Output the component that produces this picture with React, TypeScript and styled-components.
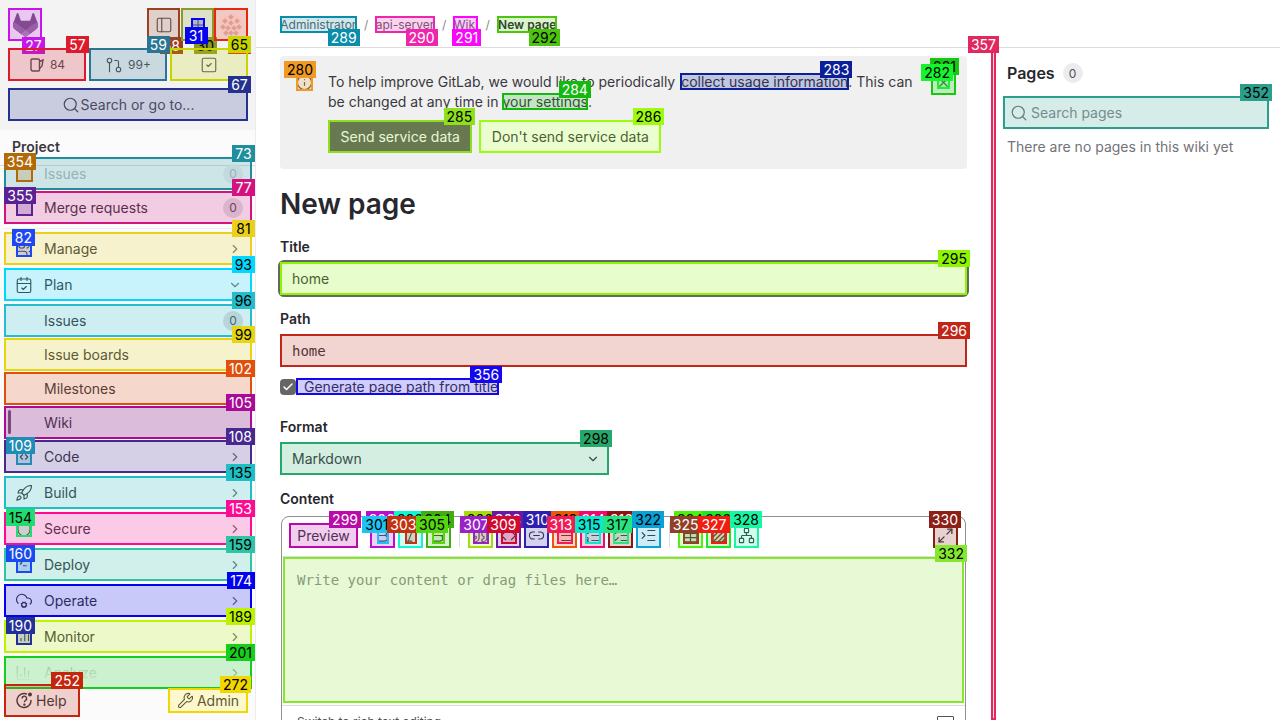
import React from "react";
import styled, { createGlobalStyle } from "styled-components";
import {
  BarChart3,
  Bold,
  CalendarCheck,
  Check,
  ChevronDown,
  ChevronRight,
  CloudCog,
  Code,
  GitPullRequest,
  Grid2x2,
  Indent,
  Info,
  Italic,
  Link2,
  List,
  ListChecks,
  ListOrdered,
  Maximize2,
  Network,
  PanelLeft,
  Quote,
  Rocket,
  Search,
  Shield,
  SquareCheck,
  SquareCode,
  SquareTerminal,
  Strikethrough,
  Table,
  Users,
  Wrench,
  X,
} from "lucide-react";

const GlobalStyle = createGlobalStyle`
  html, body {
    margin: 0;
    height: 100%;
    overflow: hidden;
    background: #fff;
  }
  body {
    font-family: Inter, "Liberation Sans", sans-serif;
    font-size: 14px;
    color: #3a383f;
  }
  * {
    box-sizing: border-box;
  }
  svg {
    flex: none;
  }
`;

// overlay: numbered outline drawn above whatever part it is put in
const MarkBox = styled.span<{ $c: string }>`
  position: absolute;
  inset: 0;
  z-index: 5;
  border: 2px solid ${(p) => p.$c};
  background: ${(p) => p.$c}33;
  pointer-events: none;
`;

const MarkTag = styled.span<{ $c: string; $ink: string; $below?: boolean }>`
  position: absolute;
  right: -5px;
  top: ${(p) => (p.$below ? "calc(100% - 2px)" : "-14px")};
  min-width: 23px;
  height: 17px;
  padding: 0 3px;
  background: ${(p) => p.$c};
  color: ${(p) => p.$ink};
  font: 400 14px/17px Inter, sans-serif;
  text-align: center;
  white-space: nowrap;
`;

function inkFor(c: string) {
  const r = parseInt(c.slice(1, 3), 16);
  const g = parseInt(c.slice(3, 5), 16);
  const b = parseInt(c.slice(5, 7), 16);
  return 0.299 * r + 0.587 * g + 0.114 * b > 118 ? "#000" : "#fff";
}

function Mark({ c, n, below }: { c: string; n: string; below?: boolean }) {
  return (
    <MarkBox $c={c}>
      <MarkTag $c={c} $ink={inkFor(c)} $below={below}>
        {n}
      </MarkTag>
    </MarkBox>
  );
}

const Page = styled.div`
  display: flex;
  width: 1280px;
  height: 720px;
`;

const Sidebar = styled.aside`
  flex: none;
  display: flex;
  flex-direction: column;
  width: 256px;
  height: 720px;
  background: #fbfbfc;
  border-right: 1px solid #ececef;
`;

const SideTop = styled.div`
  flex: none;
  display: flex;
  flex-direction: column;
  gap: 7px;
  height: 130px;
  padding: 8px 7px 8px 8px;
  background: #f3f3f3;
`;

const TopRow = styled.div`
  display: flex;
  justify-content: space-between;
  height: 33px;
`;

const TopActions = styled.div`
  display: flex;
`;

const SquareBtn = styled.div<{ $w?: number; $ml?: number }>`
  position: relative;
  display: flex;
  align-items: center;
  justify-content: center;
  width: ${(p) => p.$w ?? 34}px;
  height: 33px;
  margin-left: ${(p) => p.$ml ?? 0}px;
  color: #535158;
`;

const Slot = styled.span<{ $s?: number; $h?: number; $bleed?: boolean }>`
  position: relative;
  flex: none;
  display: flex;
  align-items: center;
  justify-content: center;
  width: ${(p) => p.$s ?? 16}px;
  height: ${(p) => p.$h ?? p.$s ?? 16}px;
  margin-right: ${(p) => (p.$bleed ? -1 : 0)}px;
`;

const Counts = styled.div`
  display: grid;
  grid-template-columns: repeat(3, 78px);
  gap: 3px;
  height: 33px;
`;

const CountBtn = styled.div`
  position: relative;
  display: flex;
  align-items: center;
  justify-content: center;
  gap: 5px;
  font-size: 12px;
  color: #535158;
`;

const SearchBtn = styled.div`
  position: relative;
  display: flex;
  align-items: center;
  justify-content: center;
  gap: 1px;
  height: 33px;
  font-size: 14px;
  color: #535158;
`;

const Nav = styled.nav`
  position: relative;
  flex: 1;
  min-height: 0;
  padding: 7px 3px 0 4px;
`;

const ScrollEdge = styled.span`
  position: absolute;
  left: 0;
  right: 0;
  top: 35px;
  height: 1px;
  background: #dcdcde;
`;

const NavHeading = styled.div`
  height: 20px;
  padding-left: 8px;
  font-weight: 600;
  line-height: 20px;
  color: #3a383f;
`;

const NavRow = styled.div<{ $mt: number; $faded?: boolean; $active?: boolean }>`
  position: relative;
  display: flex;
  align-items: center;
  gap: 12px;
  height: 33px;
  margin-top: ${(p) => p.$mt}px;
  padding: 0 9px 0 12px;
  border-radius: 4px;
  color: ${(p) => (p.$faded ? "#b9b8bd" : "#3a383f")};
  background: ${(p) => (p.$active ? "#e9e9ec" : "transparent")};
`;

const NavLabel = styled.span`
  flex: 1;
`;

const ActiveBar = styled.span`
  position: absolute;
  left: 4px;
  top: 4px;
  bottom: 5px;
  width: 3px;
  border-radius: 2px;
  background: #6f5b78;
`;

const Pill = styled.span<{ $faded?: boolean }>`
  display: flex;
  align-items: center;
  justify-content: center;
  width: 20px;
  height: 20px;
  border-radius: 50%;
  font-size: 12px;
  background: ${(p) => (p.$faded ? "#ececef" : "#dcdcde")};
  color: ${(p) => (p.$faded ? "#b9b8bd" : "#535158")};
`;

const Chevron = styled.span`
  display: flex;
  justify-content: center;
  width: 16px;
  color: #737278;
`;

const NavDivider = styled.hr`
  height: 1px;
  margin: 4px 0 3px;
  border: 0;
  background: #ececef;
`;

const SideFooter = styled.div`
  position: relative;
  flex: none;
  display: flex;
  align-items: flex-start;
  justify-content: space-between;
  height: 36px;
  padding: 0 7px 0 4px;
  background: #fbfbfc;
  &::before {
    content: "";
    position: absolute;
    left: 0;
    right: 0;
    top: -24px;
    height: 24px;
    background: linear-gradient(rgba(251, 251, 252, 0), rgba(251, 251, 252, 0.95));
  }
`;

const HelpBtn = styled.div`
  position: relative;
  display: flex;
  align-items: center;
  gap: 3px;
  width: 76px;
  height: 33px;
  padding-left: 12px;
  color: #3a383f;
`;

const AdminBtn = styled.div`
  position: relative;
  display: flex;
  align-items: center;
  justify-content: center;
  gap: 3px;
  width: 80px;
  height: 25px;
  margin-top: 4px;
  border-radius: 4px;
  background: #fff;
  color: #3a383f;
`;

const Main = styled.div`
  flex: 1;
  min-width: 0;
  display: flex;
  flex-direction: column;
`;

const Header = styled.header`
  flex: none;
  display: flex;
  align-items: center;
  height: 48px;
  padding: 1px 24px 0;
  border-bottom: 1px solid #dcdcde;
  font-size: 12px;
`;

const Crumb = styled.span<{ $current?: boolean }>`
  position: relative;
  height: 17px;
  line-height: 17px;
  padding: 0 ${(p) => (p.$current ? 1 : 0.3)}px;
  color: ${(p) => (p.$current ? "#28272d" : "#626168")};
  font-weight: ${(p) => (p.$current ? 600 : 400)};
`;

const CrumbSep = styled.span`
  width: 18.8px;
  text-align: center;
  color: #89888d;
`;

const Body = styled.div`
  flex: 1;
  min-height: 0;
  display: flex;
`;

const Content = styled.main`
  flex: none;
  width: 735px;
  padding: 8px 24px 0;
`;

const Alert = styled.section`
  display: flex;
  padding: 16px;
  border-radius: 4px;
  background: #f0f0f0;
`;

const AlertIcon = styled.span`
  position: relative;
  flex: none;
  display: flex;
  align-items: center;
  justify-content: center;
  width: 17px;
  height: 18px;
  margin: 1px 15px 0 0;
  color: #535158;
`;

const AlertBody = styled.div`
  flex: none;
  width: 590px;
`;

const AlertText = styled.p`
  margin: 0;
  line-height: 20px;
  color: #3a383f;
`;

const TextLink = styled.a<{ $wide?: boolean }>`
  position: relative;
  display: inline-block;
  line-height: 17px;
  margin: 0 ${(p) => (p.$wide ? -1 : 0)}px 0 ${(p) => (p.$wide ? 1 : 0)}px;
  padding: 0 ${(p) => (p.$wide ? 1 : 0)}px;
  color: #3a383f;
  text-decoration: underline;
`;

const AlertActions = styled.div`
  display: flex;
  gap: 7px;
  margin-top: 8px;
`;

const ActionBtn = styled.button<{ $primary?: boolean }>`
  position: relative;
  height: 33px;
  padding: 0 12.5px 1px;
  border: 0;
  border-radius: 4px;
  font: 400 14px Inter, sans-serif;
  background: ${(p) => (p.$primary ? "#5f5f5f" : "#fff")};
  color: ${(p) => (p.$primary ? "#fff" : "#3a383f")};
`;

const Dismiss = styled.span`
  position: relative;
  flex: none;
  display: flex;
  align-items: center;
  justify-content: center;
  width: 25px;
  height: 25px;
  margin: -2px -5px 0 auto;
  color: #535158;
`;

const PageTitle = styled.h1`
  margin: 17px 0 0;
  font-size: 28px;
  font-weight: 600;
  line-height: 36px;
  color: #28272d;
`;

const FieldLabel = styled.label<{ $mt: number }>`
  display: block;
  margin-top: ${(p) => p.$mt}px;
  font-weight: 600;
  line-height: 20px;
  color: #28272d;
`;

const InputHost = styled.div<{ $focus?: boolean }>`
  position: relative;
  height: 33px;
  margin-top: 5px;
  border-radius: 4px;
  box-shadow: ${(p) => (p.$focus ? "0 0 0 2px #666" : "none")};
`;

const TextInput = styled.input<{ $mono?: boolean }>`
  width: 100%;
  height: 100%;
  padding: 0 12px;
  border: 0;
  outline: 0;
  background: transparent;
  color: #3a383f;
  font: 400 14px ${(p) => (p.$mono ? '"DejaVu Sans Mono", monospace' : "Inter, sans-serif")};
`;

const CheckRow = styled.div`
  display: flex;
  align-items: center;
  height: 17px;
  margin-top: 11px;
`;

const CheckBox = styled.span`
  display: flex;
  align-items: center;
  justify-content: center;
  width: 16px;
  height: 16px;
  border-radius: 4px;
  background: #666;
  color: #fff;
`;

const CheckText = styled.span`
  position: relative;
  height: 17px;
  padding: 0 1px 0 8px;
  line-height: 17px;
`;

const SelectBox = styled.div`
  position: relative;
  display: flex;
  align-items: center;
  justify-content: space-between;
  width: 329px;
  height: 33px;
  margin-top: 5px;
  padding: 0 9px 0 12px;
`;

const Editor = styled.div`
  width: 685px;
  height: 400px;
  margin: 7px 0 0 1px;
  border: 1px solid #8f8f8f;
  border-radius: 8px 8px 0 0;
`;

const Toolbar = styled.div`
  display: flex;
  align-items: flex-start;
  height: 40px;
  padding: 6px 7px 0;
  border-bottom: 1px solid #dcdcde;
`;

const PreviewBtn = styled.div`
  position: relative;
  display: flex;
  align-items: center;
  justify-content: center;
  width: 69px;
  height: 25px;
  margin-right: 12px;
  color: #3a383f;
`;

const ToolGroup = styled.div`
  display: flex;
  gap: 3px;
`;

const ToolDivider = styled.span`
  width: 1px;
  height: 24px;
  margin: 0 8px;
  background: #dcdcde;
`;

const ToolBtn = styled.div<{ $end?: boolean }>`
  position: relative;
  display: flex;
  align-items: center;
  justify-content: center;
  width: 25px;
  height: 25px;
  ${(p) => (p.$end ? "margin-left: auto;" : "")}
  color: #3a383f;
`;

const WriteArea = styled.div`
  position: relative;
  height: 146px;
  margin: 0 1px;
`;

const WriteInput = styled.textarea`
  display: block;
  width: 100%;
  height: 100%;
  padding: 13px 14px;
  border: 0;
  outline: 0;
  resize: none;
  background: transparent;
  font: 400 14px/20px "DejaVu Sans Mono", monospace;
  &::placeholder {
    color: #89888d;
  }
`;

const EditorFooter = styled.div`
  display: flex;
  align-items: flex-start;
  justify-content: space-between;
  margin-top: 2px;
  padding: 8px 11px 0 15px;
  border-top: 1px solid #dcdcde;
  font-size: 12px;
  line-height: 16px;
  color: #535158;
`;

const MdBadge = styled.span`
  width: 17px;
  height: 11px;
  margin-top: 2px;
  border: 1px solid #535158;
  border-radius: 1px;
`;

const WikiAside = styled.aside`
  flex: 1;
  display: flex;
  min-width: 0;
`;

const ResizeHandle = styled.div`
  position: relative;
  flex: none;
  width: 5px;
`;

const AsideBody = styled.div`
  flex: 1;
  min-width: 0;
  padding: 13px 11px 0 7px;
`;

const AsideHeading = styled.div`
  display: flex;
  align-items: center;
  gap: 8px;
  height: 24px;
  padding-left: 4px;
  font-size: 16px;
  font-weight: 600;
  color: #28272d;
`;

const CountBadge = styled.span`
  display: flex;
  align-items: center;
  justify-content: center;
  width: 20px;
  height: 20px;
  border-radius: 50%;
  background: #ececef;
  font-size: 12px;
  font-weight: 400;
  color: #535158;
`;

const PageSearch = styled.div`
  position: relative;
  display: flex;
  align-items: center;
  gap: 3px;
  height: 33px;
  margin-top: 11px;
  padding-left: 7px;
  color: #737278;
`;

const PageSearchInput = styled.input`
  flex: 1;
  min-width: 0;
  padding: 0;
  border: 0;
  outline: 0;
  background: transparent;
  font: 400 14px Inter, sans-serif;
  &::placeholder {
    color: #89888d;
  }
`;

const EmptyText = styled.p`
  margin: 8px 0 0;
  padding-left: 4px;
  line-height: 20px;
  color: #737278;
`;

function Tanuki() {
  return (
    <svg width="25" height="24" viewBox="0 0 25 24">
      <path
        fill="#75567f"
        d="m24.507 9.5-.034-.09L21.082.562a.896.896 0 0 0-1.694.091l-2.29 7.01H7.825L5.535.653a.898.898 0 0 0-1.694-.09L.451 9.411.416 9.5a6.297 6.297 0 0 0 2.09 7.278l.012.01.03.022 5.16 3.867 2.56 1.935 1.554 1.176a1.051 1.051 0 0 0 1.268 0l1.555-1.176 2.56-1.935 5.197-3.89.014-.01A6.297 6.297 0 0 0 24.507 9.5Z"
      />
      <path
        fill="#8e7098"
        d="m24.507 9.5-.034-.09a11.44 11.44 0 0 0-4.56 2.051l-7.447 5.632 4.742 3.584 5.197-3.89.014-.01A6.297 6.297 0 0 0 24.507 9.5Z"
      />
      <path
        fill="#a68bb0"
        d="m7.707 20.677 2.56 1.935 1.555 1.176a1.051 1.051 0 0 0 1.268 0l1.555-1.176 2.56-1.935-4.743-3.584-4.755 3.584Z"
      />
      <path
        fill="#8e7098"
        d="M5.01 11.461a11.43 11.43 0 0 0-4.56-2.05L.416 9.5a6.297 6.297 0 0 0 2.09 7.278l.012.01.03.022 5.16 3.867 4.745-3.584-7.444-5.632Z"
      />
    </svg>
  );
}

function Identicon() {
  const spots = [
    [12, 4],
    [6, 8],
    [18, 8],
    [12, 10],
    [4, 14],
    [20, 14],
    [9, 15],
    [15, 15],
    [12, 20],
    [7, 20],
    [17, 20],
  ];
  return (
    <svg width="24" height="24" viewBox="0 0 24 24">
      <circle cx="12" cy="12" r="12" fill="#fbebe7" />
      {spots.map(([x, y]) => (
        <rect key={`${x}-${y}`} x={x - 2} y={y - 2} width="4" height="4" fill="#dcbcb6" transform={`rotate(45 ${x} ${y})`} />
      ))}
    </svg>
  );
}

function IssueIcon() {
  return (
    <svg width="16" height="16" viewBox="0 0 16 16" fill="none" stroke="currentColor" strokeWidth="1.4">
      <path d="M3 2h6a1.5 1.5 0 0 1 1.5 1.5V13a1 1 0 0 1-1 1H4a2 2 0 0 1-2-2V3a1 1 0 0 1 1-1z" />
      <path d="M10.5 4.5 14 3l-1 6-2.5 2.5" />
    </svg>
  );
}

function HelpIcon() {
  return (
    <svg width="17" height="17" viewBox="0 0 17 17" fill="none" stroke="currentColor" strokeWidth="1.4">
      <path d="M11 2.2A7 7 0 1 0 15 8" />
      <path d="M6 6.5a2.3 2.3 0 1 1 3.4 2c-.8.5-1 .9-1 1.7" />
      <circle cx="8.4" cy="12.6" r=".5" fill="currentColor" />
      <circle cx="14" cy="2.6" r="2" fill="currentColor" stroke="none" />
    </svg>
  );
}

function AttachIcon() {
  return (
    <svg width="16" height="16" viewBox="0 0 16 16" fill="none" stroke="currentColor" strokeWidth="1.3">
      <rect x="2" y="2" width="12" height="12" rx="1" />
      <path d="M2 9l7-7M2 14L14 2M7 14l7-7M11 14l3-3" />
    </svg>
  );
}

type NavItem = {
  label: string;
  mt: number;
  c: string;
  n: string;
  icon?: React.ReactNode;
  slot?: { c: string; n: string; size?: number };
  count?: boolean;
  arrow?: "right" | "down";
  faded?: boolean;
  active?: boolean;
  dividerBefore?: boolean;
};

const ic = { size: 18, strokeWidth: 1.5 };

const navItems: NavItem[] = [
  { label: "Issues", mt: 0, c: "#1f8f9d", n: "73", slot: { c: "#b26a06", n: "354", size: 17 }, count: true, faded: true },
  { label: "Merge requests", mt: 1, c: "#d4127f", n: "77", slot: { c: "#5a2293", n: "355", size: 17 }, count: true },
  { label: "Manage", mt: 0, c: "#e9d11b", n: "81", icon: <Users {...ic} />, slot: { c: "#1f48f2", n: "82" }, arrow: "right", dividerBefore: true },
  { label: "Plan", mt: 3, c: "#00d9ff", n: "93", icon: <CalendarCheck {...ic} />, arrow: "down" },
  { label: "Issues", mt: 3, c: "#25bccb", n: "96", count: true },
  { label: "Issue boards", mt: 1, c: "#e6d510", n: "99" },
  { label: "Milestones", mt: 1, c: "#e04f0b", n: "102" },
  { label: "Wiki", mt: 1, c: "#ab0a99", n: "105", active: true },
  { label: "Code", mt: 1, c: "#46288f", n: "108", icon: <SquareCode {...ic} />, slot: { c: "#1f8cb6", n: "109" }, arrow: "right" },
  { label: "Build", mt: 3, c: "#1dbfc4", n: "135", icon: <Rocket {...ic} />, arrow: "right" },
  { label: "Secure", mt: 3, c: "#ff0a93", n: "153", icon: <Shield {...ic} />, slot: { c: "#20dd6f", n: "154" }, arrow: "right" },
  { label: "Deploy", mt: 3, c: "#2dc4a8", n: "159", icon: <SquareTerminal {...ic} />, slot: { c: "#1a4bf1", n: "160" }, arrow: "right" },
  { label: "Operate", mt: 3, c: "#0202ee", n: "174", icon: <CloudCog {...ic} />, arrow: "right" },
  { label: "Monitor", mt: 3, c: "#bdf300", n: "189", icon: <BarChart3 {...ic} />, slot: { c: "#22309a", n: "190" }, arrow: "right" },
  { label: "Analyze", mt: 3, c: "#16cf1d", n: "201", icon: <BarChart3 {...ic} />, arrow: "right", faded: true },
];

type Tool = { c: string; n: string; icon: React.ReactNode; inner?: { c: string; n: string; w?: number } };

const ti = { size: 17, strokeWidth: 1.6 };

const toolGroups: Tool[][] = [
  [
    { c: "#b90ed1", n: "300", icon: <Bold {...ti} />, inner: { c: "#1cc4f2", n: "301", w: 12 } },
    { c: "#14f5cf", n: "302", icon: <Italic {...ti} />, inner: { c: "#c1330f", n: "303", w: 12 } },
    { c: "#3fae12", n: "304", icon: <Strikethrough {...ti} />, inner: { c: "#56d60d", n: "305", w: 13 } },
  ],
  [
    { c: "#a8db0a", n: "306", icon: <Quote {...ti} />, inner: { c: "#9a22c5", n: "307" } },
    { c: "#6c18a3", n: "308", icon: <Code {...ti} />, inner: { c: "#d00a2e", n: "309" } },
    { c: "#2f1fae", n: "310", icon: <Link2 {...ti} /> },
    { c: "#e8570a", n: "312", icon: <List {...ti} />, inner: { c: "#f01d55", n: "313" } },
    { c: "#f00a6f", n: "314", icon: <ListOrdered {...ti} />, inner: { c: "#0ee6cd", n: "315" } },
    { c: "#8d1414", n: "316", icon: <ListChecks {...ti} />, inner: { c: "#25e67e", n: "317" } },
    { c: "#0aa2d6", n: "322", icon: <Indent {...ti} /> },
  ],
  [
    { c: "#4ff00a", n: "324", icon: <Table {...ti} />, inner: { c: "#934028", n: "325" } },
    { c: "#22e52a", n: "326", icon: <AttachIcon />, inner: { c: "#f01d10", n: "327" } },
    { c: "#1af5a3", n: "328", icon: <Network {...ti} /> },
  ],
];

export default function App() {
  return (
    <Page>
      <GlobalStyle />
      <Sidebar>
        <SideTop>
          <TopRow>
            <SquareBtn>
              <Tanuki />
              <Mark c="#c518e8" n="27" below />
            </SquareBtn>
            <TopActions>
              <SquareBtn $w={33}>
                <PanelLeft size={18} strokeWidth={1.5} />
                <Mark c="#9b3f22" n="58" below />
              </SquareBtn>
              <SquareBtn $w={33} $ml={1}>
                <Mark c="#8b9a26" n="30" below />
                <Slot $s={14} $h={13}>
                  <Grid2x2 size={16} strokeWidth={1.5} />
                  <Mark c="#0606ee" n="31" below />
                </Slot>
              </SquareBtn>
              <SquareBtn>
                <Identicon />
                <Mark c="#e8270f" n="32" below />
              </SquareBtn>
            </TopActions>
          </TopRow>
          <Counts>
            <CountBtn>
              <IssueIcon />
              84
              <Mark c="#dd1b2c" n="57" />
            </CountBtn>
            <CountBtn>
              <GitPullRequest size={18} strokeWidth={1.5} />
              99+
              <Mark c="#2a7593" n="59" />
            </CountBtn>
            <CountBtn>
              <SquareCheck size={18} strokeWidth={1.5} />
              <Mark c="#c8d400" n="65" />
            </CountBtn>
          </Counts>
          <SearchBtn>
            <Search size={18} strokeWidth={1.6} />
            Search or go to...
            <Mark c="#25318f" n="67" />
          </SearchBtn>
        </SideTop>
        <Nav>
          <ScrollEdge />
          <NavHeading>Project</NavHeading>
          {navItems.map((item, i) => (
            <React.Fragment key={i}>
              {item.dividerBefore && <NavDivider />}
              <NavRow $mt={item.mt} $faded={item.faded} $active={item.active}>
                <Mark c={item.c} n={item.n} />
                {item.active && <ActiveBar />}
                <Slot $s={item.slot?.size ?? 16} $bleed={item.slot?.size === 17}>
                  {item.icon}
                  {item.slot && <Mark c={item.slot.c} n={item.slot.n} />}
                </Slot>
                <NavLabel>{item.label}</NavLabel>
                {item.count && <Pill $faded={item.faded}>0</Pill>}
                {item.arrow && (
                  <Chevron>{item.arrow === "down" ? <ChevronDown size={14} /> : <ChevronRight size={14} />}</Chevron>
                )}
              </NavRow>
            </React.Fragment>
          ))}
        </Nav>
        <SideFooter>
          <HelpBtn>
            <HelpIcon />
            Help
            <Mark c="#c4260d" n="252" />
          </HelpBtn>
          <AdminBtn>
            <Wrench size={17} strokeWidth={1.5} />
            Admin
            <Mark c="#f2d600" n="272" />
          </AdminBtn>
        </SideFooter>
      </Sidebar>

      <Main>
        <Header>
          <Crumb>
            Administrator
            <Mark c="#0a8cab" n="289" below />
          </Crumb>
          <CrumbSep>/</CrumbSep>
          <Crumb>
            api-server
            <Mark c="#f025ad" n="290" below />
          </Crumb>
          <CrumbSep>/</CrumbSep>
          <Crumb>
            Wiki
            <Mark c="#f808f8" n="291" below />
          </Crumb>
          <CrumbSep>/</CrumbSep>
          <Crumb $current>
            New page
            <Mark c="#4dc40e" n="292" below />
          </Crumb>
        </Header>
        <Body>
          <Content>
            <Alert>
              <AlertIcon>
                <Info size={17} strokeWidth={1.6} />
                <Mark c="#f09a23" n="280" />
              </AlertIcon>
              <AlertBody>
                <AlertText>
                  To help improve GitLab, we would like to periodically{" "}
                  <TextLink $wide>
                    collect usage information
                    <Mark c="#0a1f9a" n="283" />
                  </TextLink>
                  . This can be changed at any time in{" "}
                  <TextLink>
                    your settings
                    <Mark c="#13b90f" n="284" />
                  </TextLink>
                  .
                </AlertText>
                <AlertActions>
                  <ActionBtn $primary>
                    Send service data
                    <Mark c="#8ee01c" n="285" />
                  </ActionBtn>
                  <ActionBtn>
                    Don't send service data
                    <Mark c="#9dfb0f" n="286" />
                  </ActionBtn>
                </AlertActions>
              </AlertBody>
              <Dismiss>
                <Mark c="#15c90f" n="281" />
                <Slot $s={13}>
                  <X size={15} strokeWidth={2} />
                  <Mark c="#14f52d" n="282" />
                </Slot>
              </Dismiss>
            </Alert>

            <PageTitle>New page</PageTitle>

            <FieldLabel $mt={15}>Title</FieldLabel>
            <InputHost $focus>
              <TextInput readOnly value="home" />
              <Mark c="#8cf500" n="295" />
            </InputHost>

            <FieldLabel $mt={14}>Path</FieldLabel>
            <InputHost>
              <TextInput $mono readOnly value="home" />
              <Mark c="#c0261a" n="296" />
            </InputHost>

            <CheckRow>
              <CheckBox>
                <Check size={12} strokeWidth={3} />
              </CheckBox>
              <CheckText>
                Generate page path from title
                <Mark c="#1207ee" n="356" />
              </CheckText>
            </CheckRow>

            <FieldLabel $mt={22}>Format</FieldLabel>
            <SelectBox>
              Markdown
              <ChevronDown size={14} />
              <Mark c="#27a86b" n="298" />
            </SelectBox>

            <FieldLabel $mt={14}>Content</FieldLabel>
            <Editor>
              <Toolbar>
                <PreviewBtn>
                  Preview
                  <Mark c="#b80ba8" n="299" />
                </PreviewBtn>
                {toolGroups.map((group, g) => (
                  <React.Fragment key={g}>
                    {g > 0 && <ToolDivider />}
                    <ToolGroup>
                      {group.map((tool) => (
                        <ToolBtn key={tool.n}>
                          <Mark c={tool.c} n={tool.n} />
                          {tool.inner ? (
                            <Slot $s={tool.inner.w ?? 16} $h={16}>
                              {tool.icon}
                              <Mark c={tool.inner.c} n={tool.inner.n} />
                            </Slot>
                          ) : (
                            tool.icon
                          )}
                        </ToolBtn>
                      ))}
                    </ToolGroup>
                  </React.Fragment>
                ))}
                <ToolBtn $end>
                  <Maximize2 size={17} strokeWidth={1.8} />
                  <Mark c="#8a2016" n="330" />
                </ToolBtn>
              </Toolbar>
              <WriteArea>
                <WriteInput placeholder="Write your content or drag files here…" />
                <Mark c="#85e82e" n="332" />
              </WriteArea>
              <EditorFooter>
                Switch to rich text editing
                <MdBadge />
              </EditorFooter>
            </Editor>
          </Content>

          <WikiAside>
            <ResizeHandle>
              <Mark c="#e02a5f" n="357" />
            </ResizeHandle>
            <AsideBody>
              <AsideHeading>
                Pages
                <CountBadge>0</CountBadge>
              </AsideHeading>
              <PageSearch>
                <Search size={18} strokeWidth={1.6} />
                <PageSearchInput placeholder="Search pages" />
                <Mark c="#2c9e8c" n="352" />
              </PageSearch>
              <EmptyText>There are no pages in this wiki yet</EmptyText>
            </AsideBody>
          </WikiAside>
        </Body>
      </Main>
    </Page>
  );
}
